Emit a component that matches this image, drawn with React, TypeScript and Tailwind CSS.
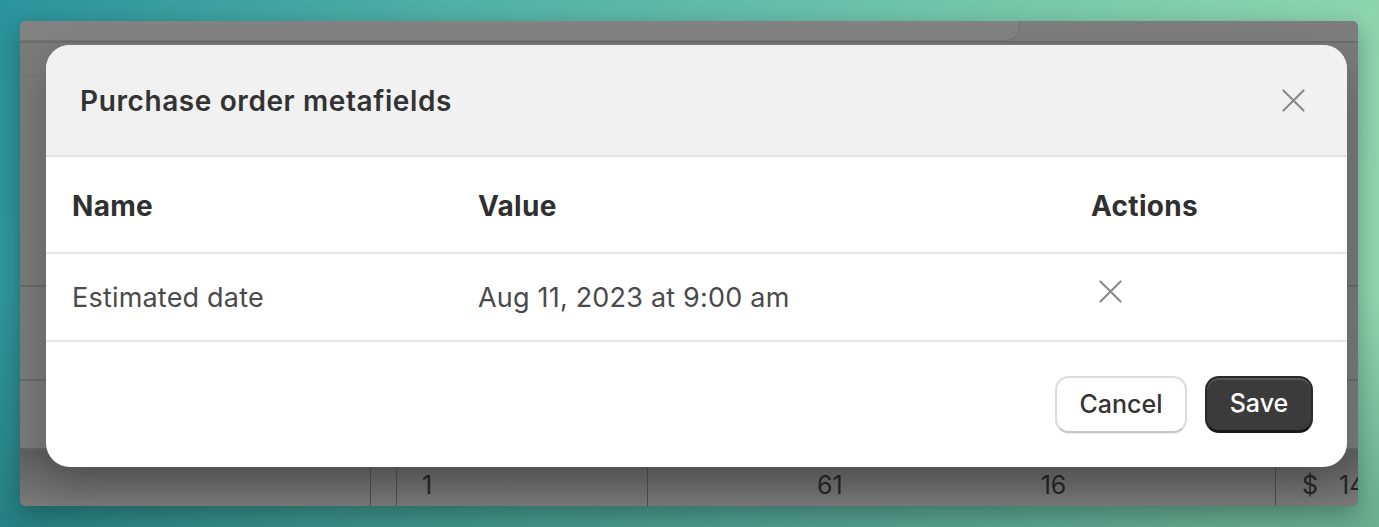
import React from 'react';

const font = { fontFamily: 'Inter, "Noto Sans", "Liberation Sans", sans-serif' };

const Cross: React.FC<{ className?: string }> = ({ className }) => (
  <svg viewBox="0 0 24 24" className={className} fill="none" stroke="currentColor" strokeWidth={2.2} strokeLinecap="round">
    <path d="M1.5 1.5 22.5 22.5M22.5 1.5 1.5 22.5" />
  </svg>
);

const App: React.FC = () => {
  return (
    <div
      className="w-[1379px] h-[527px] pt-[21px] pl-[20px] bg-[linear-gradient(180deg,rgba(0,0,0,0)_55%,rgba(10,70,70,0.3)_100%),linear-gradient(100deg,#2a939b_0%,#4fb0a6_30%,#6dc3a9_60%,#94d9b1_100%)]"
      style={font}
    >
      {/* Dimmed page behind the modal */}
      <div className="relative w-[1338px] h-[485px] rounded-[6px] overflow-hidden bg-[#7b7a7a] shadow-[0_8px_24px_rgba(0,0,0,0.3)] flex flex-col">
        <div className="h-[22px] flex border-b-2 border-[#6c6c6c] bg-[#7e7d7d]">
          <div className="w-[1000px] h-full rounded-br-[14px] bg-[#838282] border-r border-b border-[#747373]" />
        </div>
        <div className="h-[34px] border-b border-[#747373]" />
        <div className="h-[210px] border-b-2 border-[#6a6a6a]" />
        <div className="h-[94px] border-b-2 border-[#6a6a6a]" />
        <div className="h-[69px] border-b-2 border-[#666]" />
        <div className="flex-1 flex items-end bg-[linear-gradient(180deg,#5f5f5f_0%,#6a6a6a_40%,#7a7a7a_100%)] text-[25px] text-[#262626]">
          <div className="w-[350px] h-[40px] shrink-0" />
          <div className="w-[26px] h-[40px] shrink-0 border-l border-[#4f4f4f]" />
          <div className="w-[251px] h-[40px] shrink-0 border-l border-[#4f4f4f] rounded-tl-[6px] pl-[25px] flex items-center">1</div>
          <div className="w-[628px] h-[40px] shrink-0 border-l border-[#4f4f4f] flex items-center">
            <span className="ml-[169px]">61</span>
            <span className="ml-[198px]">16</span>
          </div>
          <div className="flex-1 min-w-0 overflow-hidden h-[40px] border-l border-[#4f4f4f] pl-[26px] flex items-center gap-[21px] whitespace-nowrap">
            <span>$</span>
            <span>14</span>
          </div>
        </div>

        {/* Modal */}
        <div className="absolute left-[26px] top-[24px] w-[1301px] h-[422px] rounded-[24px] bg-white overflow-hidden shadow-[0_20px_40px_rgba(0,0,0,0.22)] flex flex-col">
          <div className="h-[112px] shrink-0 bg-[#f1f1f1] border-b-2 border-[#e3e3e3] flex items-center justify-between pl-[34px] pr-[42px]">
            <h2 className="text-[28px] font-semibold text-[#333] tracking-[0.6px] pt-[2px]">Purchase order metafields</h2>
            <Cross className="w-[23px] h-[23px] text-[#8a8a8a]" />
          </div>

          <div className="grid grid-cols-[406px_613px_1fr] h-[97px] shrink-0 items-center border-b-2 border-[#e6e6e6] text-[28px] font-bold text-[#303030] tracking-[0.3px] pl-[26px] pt-[2px]">
            <div>Name</div>
            <div>Value</div>
            <div>Actions</div>
          </div>

          <div className="grid grid-cols-[406px_613px_1fr] h-[88px] shrink-0 items-center border-b-2 border-[#e6e6e6] text-[27px] text-[#4a4a4a] tracking-[0.2px] pl-[26px] pt-[2px]">
            <div>Estimated date</div>
            <div>Aug 11, 2023 at 9:00 am</div>
            <div className="pl-[8px] pb-[14px]">
              <Cross className="w-[23px] h-[23px] text-[#8a8a8a]" />
            </div>
          </div>

          <div className="flex-1 flex items-start justify-end gap-[18px] pt-[34px] pr-[34px]">
            <button className="w-[132px] h-[57px] rounded-[14px] border-2 border-[#dcdcdc] border-b-[#c8c8c8] bg-white text-[25px] font-medium text-[#333] shadow-[0_1px_0_rgba(0,0,0,0.08)]">
              Cancel
            </button>
            <button className="w-[108px] h-[57px] rounded-[14px] bg-[#3b3b3b] border-2 border-[#2a2a2a] border-b-[#1a1a1a] border-b-[3px] text-[25px] font-medium text-white shadow-[inset_0_2px_0_rgba(255,255,255,0.15)]">
              Save
            </button>
          </div>
        </div>
      </div>
    </div>
  );
};

export default App;
